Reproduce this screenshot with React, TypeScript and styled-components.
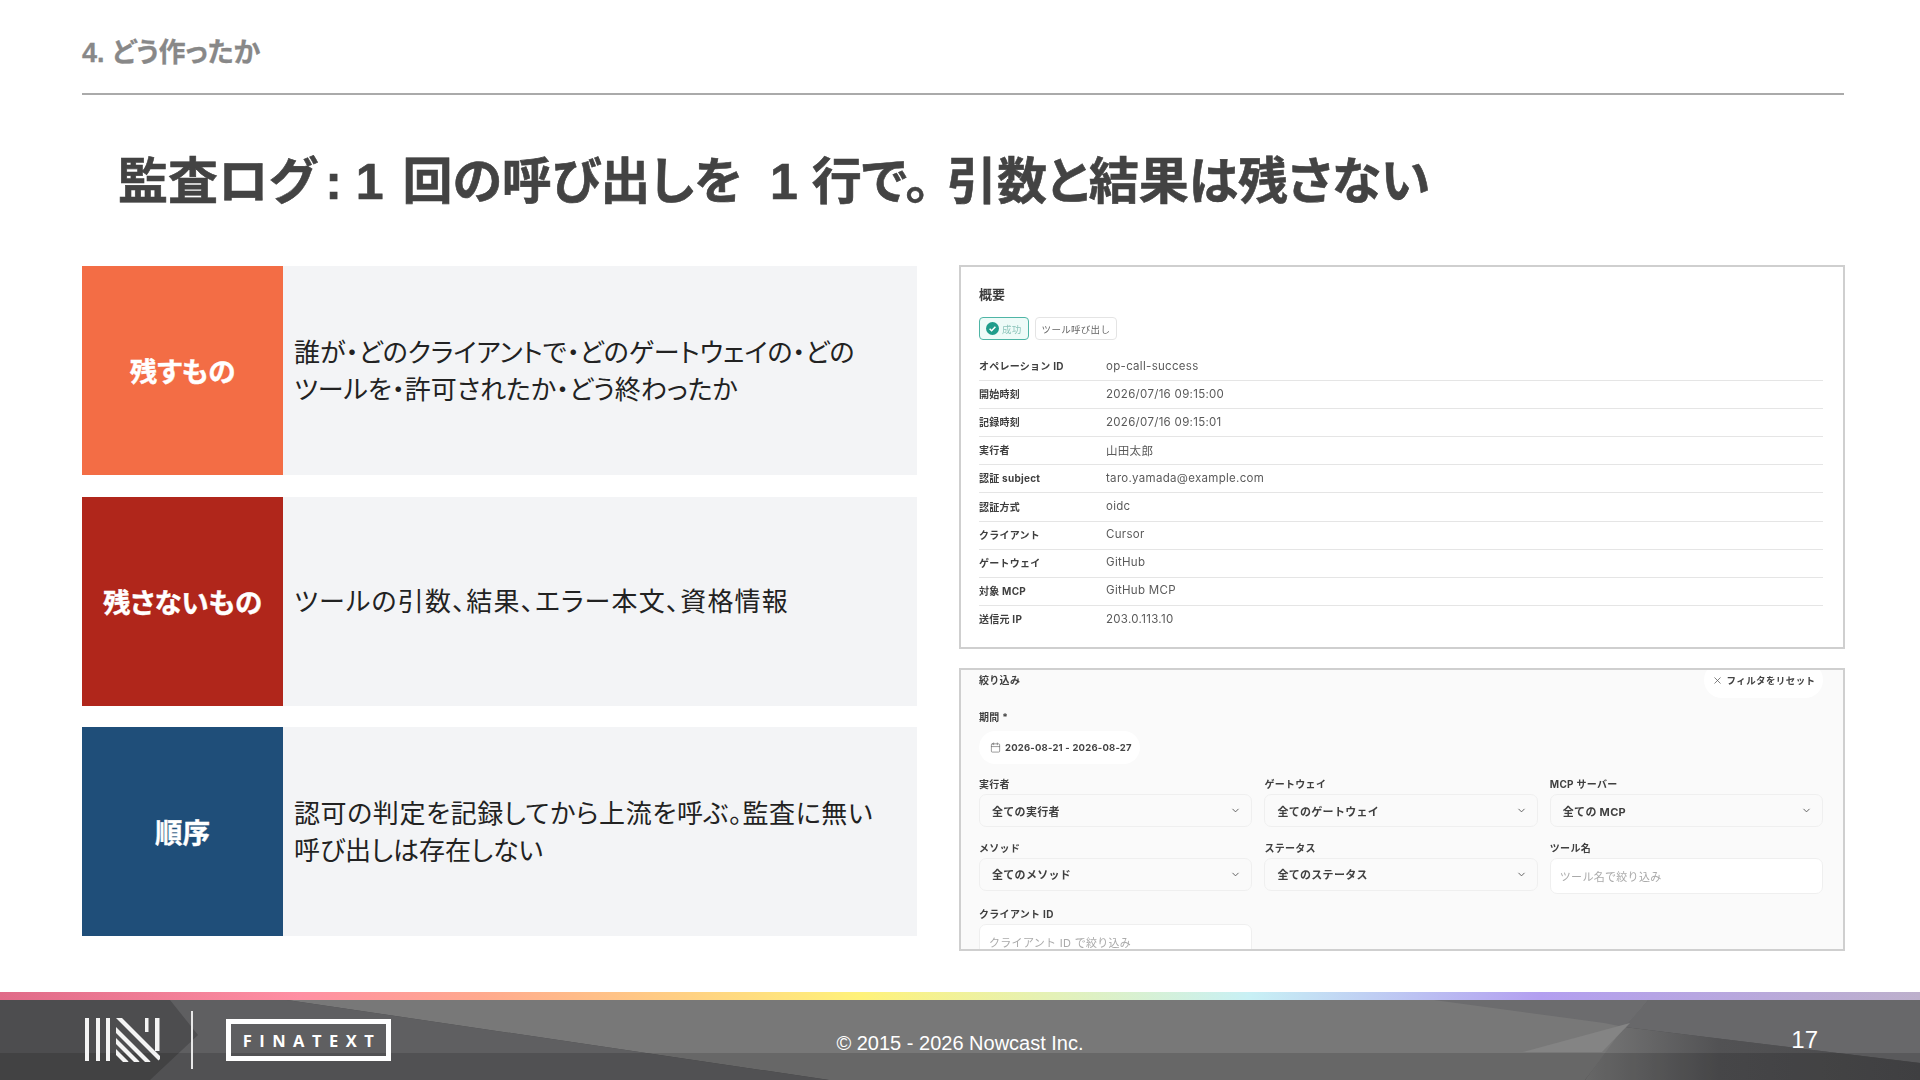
import styled, { createGlobalStyle } from "styled-components";
import { Calendar, ChevronDown, X } from "lucide-react";

const GlobalStyle = createGlobalStyle`
    html, body {
        margin: 0;
        padding: 0;
        background: #fff;
    }
    * {
        box-sizing: border-box;
    }
`;

const SLIDE_FONT = `"Liberation Sans", "Noto Sans CJK JP", sans-serif`;
const SHOT_FONT = `Inter, "Noto Sans CJK JP", sans-serif`;

const Page = styled.div`
    width: 1920px;
    height: 1080px;
    display: flex;
    flex-direction: column;
    overflow: hidden;
    background: #fff;
    font-family: ${SLIDE_FONT};
    font-feature-settings: "palt";
`;

const SectionBar = styled.div`
    height: 95px;
    margin: 0 76px 0 82px;
    padding-top: 37px;
    border-bottom: 2px solid #aaa;
    color: #888;
    font-size: 27px;
    font-weight: 700;
    line-height: 32px;
    -webkit-text-stroke: 0.3px #888;
`;

const Title = styled.h1`
    margin: 57px 0 54px;
    padding-left: 118px;
    color: #434343;
    font-size: 50px;
    font-weight: 700;
    line-height: 60px;
    white-space: pre;
    -webkit-text-stroke: 0.6px #434343;
`;

const TitleNumber = styled.span`
    margin: 0 5px 0 9px;
`;

const TitleStop = styled.span`
    margin-right: 17px;
`;

const Content = styled.div`
    display: grid;
    grid-template-columns: 835px 886px;
    column-gap: 42px;
    margin-left: 82px;
`;

const RowList = styled.div`
    display: flex;
    flex-direction: column;
    gap: 21.5px;
`;

const Row = styled.div`
    display: flex;
    height: 209px;
    background: #f3f4f6;
`;

const RowLabel = styled.div<{ $color: string }>`
    flex: 0 0 201px;
    display: flex;
    align-items: center;
    justify-content: center;
    padding-bottom: 1px;
    background: ${(p) => p.$color};
    color: #fff;
    font-size: 27.5px;
    font-weight: 700;
    -webkit-text-stroke: 0.4px #fff;
`;

const RowText = styled.div`
    display: flex;
    flex-direction: column;
    justify-content: center;
    padding: 2px 0 0 11px;
    color: #222;
    font-size: 26px;
    line-height: 37px;
`;

const RowLine = styled.div<{ $tracking: number }>`
    letter-spacing: ${(p) => p.$tracking}px;
`;

const ShotColumn = styled.div`
    display: flex;
    flex-direction: column;
    gap: 19px;
    margin-top: -1px;
`;

const ShotFrame = styled.div<{ $height: number; $bg: string }>`
    height: ${(p) => p.$height}px;
    padding: 0 20px 0 18px;
    border: 2px solid #cfcfcf;
    background: ${(p) => p.$bg};
    overflow: hidden;
    font-family: ${SHOT_FONT};
    font-feature-settings: normal;
`;

const ShotInner = styled.div`
    filter: blur(0.4px);
`;

const OverviewTitle = styled.div`
    margin-top: 20px;
    color: #3c3c3c;
    font-size: 13px;
    font-weight: 700;
    line-height: 14px;
`;

const BadgeRow = styled.div`
    display: flex;
    gap: 6px;
    margin: 16px 0 13px;
`;

const Badge = styled.div<{ $success?: boolean }>`
    height: 23px;
    display: flex;
    align-items: center;
    gap: 3px;
    padding: 0 6px;
    border: 1px solid ${(p) => (p.$success ? "#4fb5a6" : "#e4e4e4")};
    border-radius: 4px;
    background: ${(p) => (p.$success ? "#eefbf8" : "#fff")};
    color: ${(p) => (p.$success ? "#8cc4ba" : "#666")};
    font-size: 9.5px;
    letter-spacing: 0.3px;
`;

const InfoRow = styled.div`
    height: 28.1px;
    display: flex;
    align-items: center;
    padding-bottom: 2px;
    border-bottom: 1px solid #e5e5e5;

    &:last-child {
        border-bottom: none;
    }
`;

const InfoLabel = styled.div`
    width: 127px;
    color: #3f3f3f;
    font-size: 10px;
    font-weight: 700;
    letter-spacing: 0.25px;
`;

const InfoValue = styled.div`
    color: #5a5a5a;
    font-size: 11.5px;
    letter-spacing: 0.3px;
`;

const FilterHead = styled.div`
    height: 36px;
    margin-top: -8px;
    display: flex;
    align-items: center;
    justify-content: space-between;
`;

const FieldLabel = styled.div`
    color: #3f3f3f;
    font-size: 10px;
    font-weight: 700;
    line-height: 14px;
    letter-spacing: 0.3px;
`;

const ResetButton = styled.div`
    height: 36px;
    width: 119px;
    display: flex;
    align-items: center;
    justify-content: center;
    gap: 4px;
    border-radius: 18px;
    background: #fff;
    color: #444;
    font-size: 9.5px;
    font-weight: 700;
    letter-spacing: 0.4px;
`;

const PeriodBlock = styled.div`
    margin: 12px 0 13px;
    display: flex;
    flex-direction: column;
    align-items: flex-start;
    gap: 7px;
`;

const DatePill = styled.div`
    width: 161px;
    height: 33px;
    display: flex;
    align-items: center;
    gap: 4px;
    padding-left: 11px;
    border-radius: 17px;
    background: #fff;
    color: #444;
    font-size: 9.5px;
    font-weight: 700;
    letter-spacing: 0.2px;
    white-space: nowrap;

    svg {
        flex-shrink: 0;
    }
`;

const FieldGrid = styled.div`
    display: grid;
    grid-template-columns: repeat(3, 273.4px);
    column-gap: 12px;
    row-gap: 13.5px;
    align-items: start;
`;

const Field = styled.div`
    display: flex;
    flex-direction: column;
    gap: 3px;
`;

const SelectBox = styled.div`
    height: 33px;
    display: flex;
    align-items: center;
    justify-content: space-between;
    padding: 0 10px 0 12px;
    border: 1px solid #efefef;
    border-radius: 7px;
    background: #fafafa;
    color: #3f3f3f;
    font-size: 11px;
    font-weight: 700;
    letter-spacing: 0.3px;
`;

const TextBox = styled.div`
    height: 36px;
    display: flex;
    align-items: center;
    padding-left: 9px;
    border: 1px solid #efefef;
    border-radius: 7px;
    background: #fff;
    color: #aaa;
    font-size: 11px;
    letter-spacing: 0.3px;
`;

const Rainbow = styled.div`
    height: 8px;
    margin-top: auto;
    background: linear-gradient(
        90deg,
        #e06a88 0,
        #ff8fa3 300px,
        #ffa98e 480px,
        #fff27a 860px,
        #c8f0f5 1250px,
        #b39ff0 1540px,
        #bdb0cc 1920px
    );
`;

const Footer = styled.footer`
    position: relative;
    height: 80px;
    display: grid;
    grid-template-columns: 1fr auto 1fr;
    align-items: center;
    background: #4d4d4f;
    color: #fff;
`;

const FooterArt = styled.svg`
    position: absolute;
    inset: 0;
    width: 1920px;
    height: 80px;
`;

const LogoGroup = styled.div`
    position: relative;
    display: flex;
    align-items: center;
    padding-left: 85px;
`;

const Divider = styled.div`
    width: 2px;
    height: 58px;
    margin: 0 33px 0 31px;
    background: #e8e8e8;
`;

const Wordmark = styled.div`
    width: 165px;
    height: 42px;
    display: flex;
    align-items: center;
    justify-content: center;
    padding-left: 7px;
    border: 5px solid #fff;
    color: #fff;
    font-family: "Open Sans", sans-serif;
    font-size: 16.5px;
    font-weight: 700;
    letter-spacing: 7.5px;
`;

const Copyright = styled.div`
    position: relative;
    margin-top: 6px;
    font-size: 20px;
`;

const PageNumber = styled.div`
    position: relative;
    justify-self: end;
    padding-right: 102px;
    font-size: 24px;
`;

const facts = [
    ["オペレーション ID", "op-call-success"],
    ["開始時刻", "2026/07/16 09:15:00"],
    ["記録時刻", "2026/07/16 09:15:01"],
    ["実行者", "山田太郎"],
    ["認証 subject", "taro.yamada@example.com"],
    ["認証方式", "oidc"],
    ["クライアント", "Cursor"],
    ["ゲートウェイ", "GitHub"],
    ["対象 MCP", "GitHub MCP"],
    ["送信元 IP", "203.0.113.10"],
];

const rows = [
    {
        label: "残すもの",
        color: "#f36d45",
        lines: [
            { text: "誰が・どのクライアントで・どのゲートウェイの・どの", tracking: 0 },
            { text: "ツールを・許可されたか・どう終わったか", tracking: 0 },
        ],
    },
    {
        label: "残さないもの",
        color: "#b0261b",
        lines: [{ text: "ツールの引数、結果、エラー本文、資格情報", tracking: 1.2 }],
    },
    {
        label: "順序",
        color: "#1f4e79",
        lines: [
            { text: "認可の判定を記録してから上流を呼ぶ。監査に無い", tracking: 0.6 },
            { text: "呼び出しは存在しない", tracking: 0 },
        ],
    },
];

function SelectField({ label, value }: { label: string; value: string }) {
    return (
        <Field>
            <FieldLabel>{label}</FieldLabel>
            <SelectBox>
                {value}
                <ChevronDown size={11} color="#555" strokeWidth={2} />
            </SelectBox>
        </Field>
    );
}

function InputField({ label, hint }: { label: string; hint: string }) {
    return (
        <Field>
            <FieldLabel>{label}</FieldLabel>
            <TextBox>{hint}</TextBox>
        </Field>
    );
}

function NowcastMark() {
    return (
        <svg width="75" height="44" viewBox="0 0 75 44">
            <defs>
                <clipPath id="n-clip">
                    <rect x="31" y="0" width="44" height="44" />
                </clipPath>
            </defs>
            <g fill="#f4f4f4">
                <rect x="0" y="0" width="4" height="43" />
                <rect x="11" y="0" width="4" height="43" />
                <rect x="21" y="0" width="4" height="43" />
                <rect x="60" y="0" width="3.5" height="14" />
                <rect x="70" y="0" width="4.5" height="33" />
            </g>
            <g clipPath="url(#n-clip)" stroke="#f4f4f4" strokeWidth="4.2">
                <line x1="28" y1="-6" x2="75" y2="41" />
                <line x1="21" y1="2" x2="64" y2="45" />
                <line x1="22" y1="14" x2="53" y2="45" />
                <line x1="22" y1="25" x2="42" y2="45" />
            </g>
        </svg>
    );
}

export default function App() {
    return (
        <Page>
            <GlobalStyle />
            <SectionBar>4. どう作ったか</SectionBar>
            <Title>
                監査ログ<TitleNumber>: 1</TitleNumber>
                {" 回の呼び出しを  1 行で"}
                <TitleStop>。</TitleStop>
                引数と結果は残さない
            </Title>
            <Content>
                <RowList>
                    {rows.map((r) => (
                        <Row key={r.label}>
                            <RowLabel $color={r.color}>{r.label}</RowLabel>
                            <RowText>
                                {r.lines.map((l) => (
                                    <RowLine key={l.text} $tracking={l.tracking}>
                                        {l.text}
                                    </RowLine>
                                ))}
                            </RowText>
                        </Row>
                    ))}
                </RowList>
                <ShotColumn>
                    <ShotFrame $height={384} $bg="#fff">
                        <ShotInner>
                            <OverviewTitle>概要</OverviewTitle>
                            <BadgeRow>
                                <Badge $success>
                                    <svg width="13" height="13" viewBox="0 0 13 13">
                                        <circle cx="6.5" cy="6.5" r="6.5" fill="#1f9d8b" />
                                        <path d="M3.6 6.7l2 2 3.8-4" fill="none" stroke="#fff" strokeWidth="1.5" />
                                    </svg>
                                    成功
                                </Badge>
                                <Badge>ツール呼び出し</Badge>
                            </BadgeRow>
                            {facts.map(([k, v]) => (
                                <InfoRow key={k}>
                                    <InfoLabel>{k}</InfoLabel>
                                    <InfoValue>{v}</InfoValue>
                                </InfoRow>
                            ))}
                        </ShotInner>
                    </ShotFrame>
                    <ShotFrame $height={283} $bg="#fafafa">
                        <ShotInner>
                            <FilterHead>
                                <FieldLabel>絞り込み</FieldLabel>
                                <ResetButton>
                                    <X size={11} color="#555" strokeWidth={1.6} />
                                    フィルタをリセット
                                </ResetButton>
                            </FilterHead>
                            <PeriodBlock>
                                <FieldLabel>期間 *</FieldLabel>
                                <DatePill>
                                    <Calendar size={11} color="#666" strokeWidth={1.4} />
                                    2026-08-21 - 2026-08-27
                                </DatePill>
                            </PeriodBlock>
                            <FieldGrid>
                                <SelectField label="実行者" value="全ての実行者" />
                                <SelectField label="ゲートウェイ" value="全てのゲートウェイ" />
                                <SelectField label="MCP サーバー" value="全ての MCP" />
                                <SelectField label="メソッド" value="全てのメソッド" />
                                <SelectField label="ステータス" value="全てのステータス" />
                                <InputField label="ツール名" hint="ツール名で絞り込み" />
                                <InputField label="クライアント ID" hint="クライアント ID で絞り込み" />
                            </FieldGrid>
                        </ShotInner>
                    </ShotFrame>
                </ShotColumn>
            </Content>
            <Rainbow />
            <Footer>
                <FooterArt viewBox="0 0 1920 80">
                    <defs>
                        <linearGradient id="fade-right" x1="0" x2="1" y1="0" y2="0">
                            <stop offset="0" stopColor="#787878" />
                            <stop offset="0.4" stopColor="#525254" />
                            <stop offset="1" stopColor="#4a4a4c" />
                        </linearGradient>
                    </defs>
                    <polygon points="287,0 1648,0 1585,80 829,80" fill="#787878" />
                    <polygon points="170,0 287,0 829,80 150,80 198,35" fill="#5f5f61" />
                    <polygon points="1434,0 1648,0 1624,27 1604,23" fill="#6c6c6e" />
                    <polygon points="1648,0 1920,0 1920,63 1624,27" fill="#68686a" />
                    <polygon points="1624,27 1920,63 1920,80 1585,80" fill="url(#fade-right)" />
                    <polygon points="1523,52 1630,23 1602,52" fill="#848484" />
                    <rect x="0" y="53" width="1920" height="27" fill="#000" opacity="0.14" />
                </FooterArt>
                <LogoGroup>
                    <NowcastMark />
                    <Divider />
                    <Wordmark>FINATEXT</Wordmark>
                </LogoGroup>
                <Copyright>© 2015 - 2026 Nowcast Inc.</Copyright>
                <PageNumber>17</PageNumber>
            </Footer>
        </Page>
    );
}
